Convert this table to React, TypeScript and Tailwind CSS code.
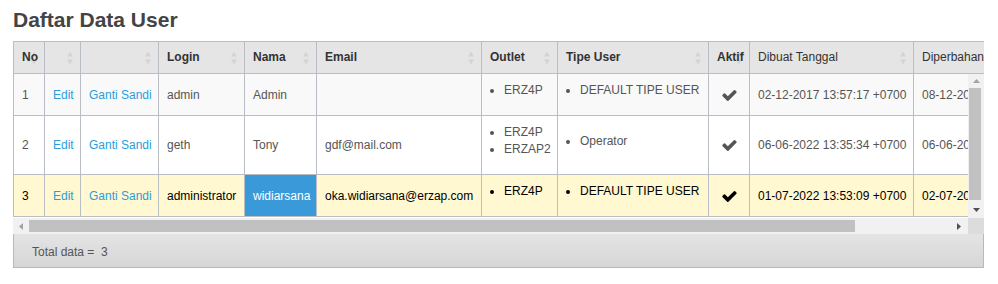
import { Fragment } from 'react';

type UserRow = {
  no: string;
  login: string;
  nama: string;
  email: string;
  outlet: string[];
  tipe: string[];
  dibuat: string;
  diubah: string;
  selected?: boolean;
};

const users: UserRow[] = [
  {
    no: '1',
    login: 'admin',
    nama: 'Admin',
    email: '',
    outlet: ['ERZ4P'],
    tipe: ['DEFAULT TIPE USER'],
    dibuat: '02-12-2017 13:57:17 +0700',
    diubah: '08-12-2017 09:14:52 +0700',
  },
  {
    no: '2',
    login: 'geth',
    nama: 'Tony',
    email: 'gdf@mail.com',
    outlet: ['ERZ4P', 'ERZAP2'],
    tipe: ['Operator'],
    dibuat: '06-06-2022 13:35:34 +0700',
    diubah: '06-06-2022 13:35:34 +0700',
  },
  {
    no: '3',
    login: 'administrator',
    nama: 'widiarsana',
    email: 'oka.widiarsana@erzap.com',
    outlet: ['ERZ4P'],
    tipe: ['DEFAULT TIPE USER'],
    dibuat: '01-07-2022 13:53:09 +0700',
    diubah: '02-07-2022 10:21:44 +0700',
    selected: true,
  },
];

// column widths, shared by the head and body tables so they line up
const colWidths = [
  'w-[32px] border-l',
  'w-[36px]',
  'w-[78px]',
  'w-[86px]',
  'w-[72px]',
  'w-[165px]',
  'w-[76px]',
  'w-[151px]',
  'w-[41px]',
  'w-[164px]',
  'w-[164px]',
];

const headers: { label: string; bold: boolean }[] = [
  { label: 'No', bold: true },
  { label: '', bold: true },
  { label: '', bold: true },
  { label: 'Login', bold: true },
  { label: 'Nama', bold: true },
  { label: 'Email', bold: true },
  { label: 'Outlet', bold: true },
  { label: 'Tipe User', bold: true },
  { label: 'Aktif', bold: true },
  { label: 'Dibuat Tanggal', bold: false },
  { label: 'Diperbahan Tanggal', bold: false },
];

function SortIcon() {
  return (
    <svg
      width="6"
      height="13"
      viewBox="0 0 6 13"
      className="absolute right-[7px] top-1/2 -translate-y-1/2"
    >
      <polygon points="3,0 6,5 0,5" fill="#d4d4d4" />
      <polygon points="0,8 6,8 3,13" fill="#d4d4d4" />
    </svg>
  );
}

function CheckIcon({ color }: { color: string }) {
  return (
    <svg width="15" height="11" viewBox="121 334 1550 1188" className="inline-block">
      <path
        fill={color}
        d="M1671 566q0 40-28 68l-724 724-136 136q-28 28-68 28t-68-28l-136-136-362-362q-28-28-28-68t28-68l136-136q28-28 68-28t68 28l294 295 656-657q28-28 68-28t68 28l136 136q28 28 28 68z"
      />
    </svg>
  );
}

function Arrow({ dir, color }: { dir: 'up' | 'down' | 'left' | 'right'; color: string }) {
  const pts = {
    up: '0,4 7,4 3.5,0',
    down: '0,0 7,0 3.5,4',
    left: '4,0 4,7 0,3.5',
    right: '0,0 0,7 4,3.5',
  }[dir];
  const vertical = dir === 'up' || dir === 'down';
  return (
    <svg width={vertical ? 7 : 4} height={vertical ? 4 : 7} viewBox={vertical ? '0 0 7 4' : '0 0 4 7'}>
      <polygon points={pts} fill={color} />
    </svg>
  );
}

function BulletList({ items }: { items: string[] }) {
  return (
    <ul className="list-disc pl-[14px] mb-[9px]">
      {items.map((it) => (
        <li key={it}>{it}</li>
      ))}
    </ul>
  );
}

const cellBase = 'border-r border-b border-[#b8bec4] px-2 pt-2 pb-[7px] align-middle whitespace-nowrap overflow-hidden';

export default function App() {
  return (
    <div className="min-h-screen bg-white px-[13px] pt-[8px] font-['Liberation_Sans',Arial,sans-serif] text-[12px] leading-[17px]">
      <h3 className="text-[21px] leading-[23px] font-bold text-[#444]">Daftar Data User</h3>

      <div className="mt-[10px] w-[971px]">
        {/* fixed header */}
        <div className="overflow-hidden">
          <table className="table-fixed border-separate border-spacing-0 w-[1065px]">
            <thead>
              <tr>
                {headers.map((h, i) => (
                  <th
                    key={i}
                    className={`${colWidths[i]} relative border-t border-r border-b border-[#b8bec4] bg-[#e5e5e5] px-2 py-[7px] text-left text-[#333] whitespace-nowrap overflow-hidden ${
                      h.bold ? 'font-bold' : 'font-normal'
                    }`}
                  >
                    <SortIcon />
                    <span className="relative">{h.label}</span>
                  </th>
                ))}
              </tr>
            </thead>
          </table>
        </div>

        {/* scrolling body */}
        <div className="flex">
          <div className="w-[955px] h-[144px] shrink-0 overflow-hidden">
            <table className="table-fixed border-separate border-spacing-0 w-[1065px]">
              <tbody>
                {users.map((u, idx) => {
                  const rowBg = u.selected ? 'bg-[#fff8d1]' : idx % 2 === 0 ? 'bg-[#f9f9f9]' : 'bg-white';
                  const text = u.selected ? 'text-black' : 'text-[#555]';
                  const cells = [
                    u.no,
                    <span className="text-[#2b9ddd]">Edit</span>,
                    <span className="text-[#2b9ddd]">Ganti Sandi</span>,
                    u.login,
                    u.nama,
                    u.email,
                    <BulletList items={u.outlet} />,
                    <BulletList items={u.tipe} />,
                    <CheckIcon color={u.selected ? '#000' : '#555'} />,
                    u.dibuat,
                    u.diubah,
                  ];
                  return (
                    <tr key={u.no} className={`${rowBg} ${text}`}>
                      {cells.map((c, i) => (
                        <td
                          key={i}
                          className={`${colWidths[i]} ${cellBase} ${
                            i === 4 && u.selected ? 'bg-[#3a9ad9] text-white' : ''
                          } ${i === 8 ? 'text-center' : ''}`}
                        >
                          <Fragment>{c}</Fragment>
                        </td>
                      ))}
                    </tr>
                  );
                })}
              </tbody>
            </table>
          </div>

          {/* vertical scrollbar */}
          <div className="w-[16px] h-[144px] shrink-0 bg-[#f1f1f1] flex flex-col">
            <div className="h-[14px] flex items-center justify-center">
              <Arrow dir="up" color="#a3a3a3" />
            </div>
            <div className="h-[112px] ml-[1px] mr-[3px] bg-[#c1c1c1]" />
            <div className="flex-1 flex items-end justify-center pb-[6px]">
              <Arrow dir="down" color="#505050" />
            </div>
          </div>
        </div>

        {/* horizontal scrollbar */}
        <div className="flex h-[16px]">
          <div className="w-[955px] shrink-0 bg-[#f1f1f1] flex items-center">
            <div className="w-[16px] flex justify-center">
              <Arrow dir="left" color="#a3a3a3" />
            </div>
            <div className="w-[826px] h-[12px] bg-[#c1c1c1]" />
            <div className="flex-1 flex justify-end pr-[7px]">
              <Arrow dir="right" color="#505050" />
            </div>
          </div>
          <div className="flex-1 bg-[#dcdcdc]" />
        </div>

        {/* footer */}
        <div className="h-[34px] border-x border-b border-[#b9b9b9] bg-linear-to-b from-[#e4e4e4] to-[#d6d6d6] flex items-center pl-[18px] pt-[3px] text-[#555]">
          Total data =&nbsp; 3
        </div>
      </div>
    </div>
  );
}
